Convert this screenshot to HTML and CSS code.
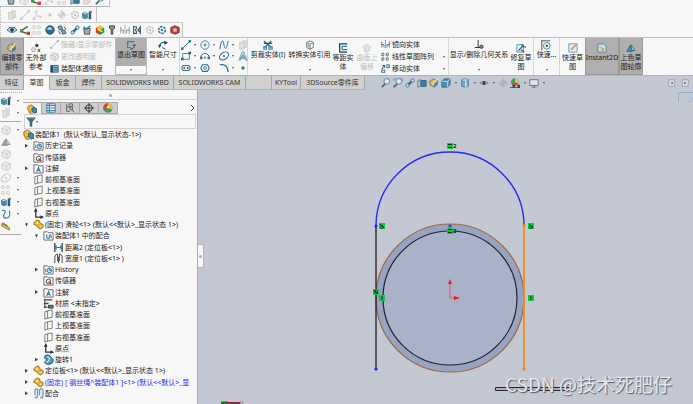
FILE: index.html
```
<!DOCTYPE html>
<html lang="zh-CN">
<head>
<meta charset="utf-8">
<title>SOLIDWORKS</title>
<link rel="stylesheet" href="styles.css">
</head>
<body>
<svg class="defs" aria-hidden="true">
<symbol id="plane" viewBox="0 0 12 12"><path d="M2 3l3-1v8l-3 1zM5 2l5-1v8l-5 1" fill="none" stroke="#555" stroke-width=".8"/></symbol>
<symbol id="planes" viewBox="0 0 12 12"><path d="M2 3h5v8H2zM5 1h5v8H7" fill="#d8d8d8" stroke="currentColor"/></symbol>
<symbol id="line" viewBox="0 0 12 12"><path d="M2 10l8-8" stroke="currentColor" stroke-width="1.2"/><path d="M0 9h3v3H0zM9 0h3v3H9z" fill="currentColor"/></symbol>
<symbol id="axis" viewBox="0 0 12 12"><path d="M5 1v6l6 1M5 7l-4 4" fill="none" stroke="currentColor"/><path d="M3 3l2-3 2 3zM9 6l3 2-3 2zM1 8v4h4z" fill="currentColor"/></symbol>
<symbol id="dot" viewBox="0 0 12 12"><circle cx="6" cy="6" r="2" fill="currentColor"/></symbol>
<symbol id="com" viewBox="0 0 12 12"><circle cx="6" cy="6" r="3.5" fill="none" stroke="currentColor"/><path d="M6 0v12M0 6h12" stroke="currentColor"/><path d="M6 3v3h3a3 3 0 0 0-3-3M6 9V6H3a3 3 0 0 0 3 3" fill="currentColor"/></symbol>
<symbol id="box" viewBox="0 0 12 12"><path d="M1 4l4-3 6 2v6l-4 3-6-3z" fill="#e6e6e6" stroke="currentColor"/><path d="M1 4l6 2 4-3M7 6v6" fill="none" stroke="currentColor"/></symbol>
<symbol id="part" viewBox="0 0 12 12"><path d="M0 4l3-2 4 2v6l-4 1-3-2z" fill="#4a8aac"/><path d="M1 4l2-1 3 1-2 1z" fill="#b9d7e4"/><path d="M8 2h3v9H8z" fill="#30586e"/><path d="M9 1h3v2H9z" fill="#777"/></symbol>
<symbol id="eye" viewBox="0 0 12 12"><path d="M0 6q6-7 12 0-6 6-12 0z" fill="#bcd5df" stroke="#355e73"/><circle cx="6" cy="6" r="2.2" fill="#17394d"/><path d="M2 2l2 2M10 2L8 4" stroke="#555"/></symbol>
<symbol id="look" viewBox="0 0 12 12"><path d="M1 6q5-4 10 0-5 4-10 0z" fill="#d5dbe2" stroke="#777"/><circle cx="6" cy="6" r="2" fill="#333"/></symbol>
<symbol id="mate" viewBox="0 0 12 12"><path d="M1 7l8-5M2 8l6 2" stroke="#444" stroke-width="1.4"/><path d="M0 5h4v4H0z" fill="#39a43d"/><path d="M8 8h4v4H8z" fill="#d43e32"/><path d="M5 3l4-2v3z" fill="#39a43d"/></symbol>
<symbol id="pattern" viewBox="0 0 12 12"><path d="M1 1h3v3H1zM7 1h3v3H7zM1 8h3v3H1zM7 8h3v3H7z" fill="none" stroke="currentColor"/></symbol>
<symbol id="ball" viewBox="0 0 12 12"><circle cx="6" cy="6" r="5" fill="#276b91" stroke="#1e4358"/><path d="M2 5q4-5 7 0-3 2-7 0" fill="#b4d8e8"/></symbol>
<symbol id="clips" viewBox="0 0 12 12"><path d="M1 2l4-1 2 4-4 1zM5 7l4-1 2 4-4 1z" fill="#78a9c2" stroke="#345467"/><path d="M8 2q3 1 2 4M2 7q0 3 3 4" fill="none" stroke="#444"/></symbol>
<symbol id="wrench" viewBox="0 0 12 12"><path d="M3 9l5-5" stroke="#346f91" stroke-width="3"/><circle cx="3" cy="9" r="2" fill="#c7dce5" stroke="#346f91"/><circle cx="9" cy="3" r="2" fill="#c7dce5" stroke="#346f91"/></symbol>
<symbol id="bucket" viewBox="0 0 12 12"><path d="M2 4h8l-1 7H3z" fill="#9aabb4" stroke="#3c4c55"/><path d="M2 2l3 3 5-4" fill="none" stroke="#26759b" stroke-width="1.5"/></symbol>
<symbol id="rainbow" viewBox="0 0 12 12"><path d="M1 3l5-3 5 3-5 3z" fill="#e5c927"/><path d="M1 3l5 3v6l-5-3z" fill="#db3629"/><path d="M11 3L6 6v6l5-3z" fill="#279847"/><path d="M3 5l6 3" stroke="#f7e632" stroke-width="2"/></symbol>
<symbol id="screw" viewBox="0 0 12 12"><path d="M3 1h6v3L7 5v6H5V5L3 4z" fill="#999" stroke="#333"/></symbol>
<symbol id="caliper" viewBox="0 0 12 12"><path d="M2 1v10M10 1v10M2 2h4M2 10h4M6 3L4 6l2 3M10 3L7 6l3 3" fill="none" stroke="#344e5b" stroke-width="1.3"/></symbol>
<symbol id="gear" viewBox="0 0 12 12"><circle cx="6" cy="6" r="4" fill="none" stroke="currentColor" stroke-width="2" stroke-dasharray="3 1"/><circle cx="6" cy="6" r="1.5" fill="currentColor"/></symbol>
<symbol id="redcube" viewBox="0 0 12 12"><path d="M1 3l5-2 5 2v6l-5 2-5-2z" fill="#c83e3e" stroke="#712b2b"/><path d="M4 4h4v4H4z" fill="#e9b7b2"/></symbol>
<symbol id="asm" viewBox="0 0 12 12"><path d="M1 3l4-2 3 2v4L4 9 1 7z" fill="#f1bd36" stroke="#95701c"/><path d="M6 5l3-1 3 2v4l-3 1-3-2z" fill="#4587ab" stroke="#285a76"/><path d="M2 8q1 4 5 3" fill="none" stroke="#d79e22" stroke-width="2"/></symbol>
<symbol id="gold" viewBox="0 0 12 12"><path d="M1 4l3-3 3 1 1 3 3 1v3l-3 2-3-2-1-2-3-1z" fill="#eab62d" stroke="#987018"/><path d="M3 4l2-1 1 2-2 1zM7 8l2-1 1 2" fill="#fae7a0"/></symbol>
<symbol id="folder" viewBox="0 0 12 12"><path d="M1 2h4l1 1h5v8H1z" fill="#fafafa" stroke="#666"/></symbol>
<symbol id="history" viewBox="0 0 12 12"><use href="#folder"/><circle cx="7" cy="7" r="2.5" fill="#d2e8f1" stroke="#287397"/><path d="M7 5v2h2M3 5v4" fill="none" stroke="#287397"/></symbol>
<symbol id="sensor" viewBox="0 0 12 12"><use href="#folder"/><circle cx="6" cy="7" r="2.5" fill="none" stroke="#444"/><path d="M6 7l3 3" stroke="#c33" stroke-width="1.5"/></symbol>
<symbol id="note" viewBox="0 0 12 12"><use href="#folder"/><path d="M4 10l2-5 2 5M5 8h2" fill="none" stroke="#2479a1" stroke-width="1.2"/></symbol>
<symbol id="matefolder" viewBox="0 0 12 12"><use href="#folder"/><path d="M4 5v3q2 3 3 0V6q2-2 2 3" fill="none" stroke="#5795b5" stroke-width="1.5"/></symbol>
<symbol id="origin" viewBox="0 0 12 12"><path d="M3 1v9h8" fill="none" stroke="#333" stroke-width="1.4"/><path d="M1 4l2-4 2 4zM8 8l4 2-4 2z" fill="#333"/></symbol>
<symbol id="distance" viewBox="0 0 12 12"><path d="M2 1v10M10 1v10" stroke="#333" stroke-width="1.3"/><path d="M2 6h8M4 4L2 6l2 2M8 4l2 2-2 2" fill="none" stroke="#2b7ea8" stroke-width="1.3"/></symbol>
<symbol id="width" viewBox="0 0 12 12"><path d="M2 11V3l3-2v8M7 9V1l3 2v8M6 4v7" fill="none" stroke="#444"/></symbol>
<symbol id="material" viewBox="0 0 12 12"><path d="M1 2h9M1 6h5M1 10h4" stroke="#444" stroke-width="1.5"/><path d="M2 1v10M6 8h5v3H6z" fill="#589" stroke="#333"/></symbol>
<symbol id="revolve" viewBox="0 0 12 12"><path d="M2 2q5-3 7 2 4 2 1 6-4 3-8 0-1-2 2-3Q5 5 2 5z" fill="#4b95bb" stroke="#255f7e"/><path d="M4 3q3 0 3 3-1 3-4 3" fill="none" stroke="#d3e8f1" stroke-width="1.3"/></symbol>
<symbol id="mates" viewBox="0 0 12 12"><path d="M2 8V3q0-2 2-2t1 2v6q-1 3-3 1M7 8V3q0-2 2-2t2 2v6q-1 3-3 1" fill="#d9e8ee" stroke="#6796ac" stroke-width="1.2"/></symbol>
<symbol id="editpart" viewBox="0 0 12 12"><path d="M1 4l4-3 5 2v5l-4 3-5-3z" fill="#e5b64e" stroke="#6d6757"/><path d="M6 6l4-2v4l-4 3z" fill="#4886a5"/><path d="M4 8l6-7" stroke="#f5eacb" stroke-width="1.5"/></symbol>
<symbol id="noref" viewBox="0 0 12 12"><circle cx="7" cy="3" r="2" fill="#444"/><circle cx="3" cy="8" r="2.5" fill="#ddd" stroke="#aaa"/><path d="M8 7l3 4M11 7l-3 4" stroke="#333"/></symbol>
<symbol id="transp" viewBox="0 0 12 12"><path d="M1 2h10v9H1z" fill="#79afc8" stroke="#255b76"/><path d="M1 2h3v9H1z" fill="#294c5c"/><path d="M5 5h5M5 8h5" stroke="#245670"/></symbol>
<symbol id="orient" viewBox="0 0 12 12"><path d="M1 4l3-3h7v7l-3 3H1z" fill="#4b8fae" stroke="#356e8b"/><path d="M1 4h7v7M8 4l3-3" fill="none" stroke="#d4e8f1"/></symbol>
<symbol id="exit" viewBox="0 0 12 12"><path d="M10 2H2v7h4" fill="none" stroke="#2e83ac" stroke-width="1.4"/><path d="M5 11q5 0 5-5M8 7l2-2 2 2" fill="none" stroke="#25546b" stroke-width="1.2"/></symbol>
<symbol id="smart" viewBox="0 0 12 12"><path d="M2 7Q3 2 9 3" fill="none" stroke="#27779e" stroke-width="1.7"/><path d="M0 6l4 0-2 4zM7 1l5 2-4 3z" fill="#294758"/><path d="M5 9l4 2" stroke="#333"/></symbol>
<symbol id="circle" viewBox="0 0 12 12"><circle cx="6" cy="6" r="5" fill="none" stroke="currentColor"/><path d="M4 6h4M6 4v4" stroke="currentColor"/></symbol>
<symbol id="spline" viewBox="0 0 12 12"><path d="M1 11C3-3 5 0 6 6s3 6 5-5" fill="none" stroke="currentColor" stroke-width="1.2"/></symbol>
<symbol id="rect" viewBox="0 0 12 12"><path d="M2 3h8v7H2z" fill="none" stroke="currentColor"/><path d="M0 8h3v3H0zM9 1h3v3H9z" fill="#245c78"/></symbol>
<symbol id="arc" viewBox="0 0 12 12"><path d="M1 8a5 5 0 0 1 10 0" fill="none" stroke="currentColor" stroke-width="1.2"/><path d="M0 7h3v3H0zM9 7h3v3H9zM5 7h2v2H5z" fill="currentColor"/></symbol>
<symbol id="ellipse" viewBox="0 0 12 12"><ellipse cx="6" cy="6" rx="6" ry="4" transform="rotate(-35 6 6)" fill="none" stroke="currentColor" stroke-width="1.2"/><circle cx="6" cy="6" r="1.3" fill="currentColor"/></symbol>
<symbol id="text" viewBox="0 0 12 12"><path d="M1 11L5 1h2l4 10H9L6 4l-3 7zM4 7h4v2H3z" fill="#d5e5ed" stroke="currentColor" stroke-width=".7"/></symbol>
<symbol id="slot" viewBox="0 0 12 12"><rect x="1" y="3" width="10" height="6" rx="3" fill="none" stroke="currentColor" stroke-width="1.3"/><path d="M3 6h6" stroke="#333" stroke-width="2" stroke-dasharray="2 2"/></symbol>
<symbol id="poly" viewBox="0 0 12 12"><path d="M1 6l2-4h6l2 4-2 4H3z" fill="none" stroke="currentColor" stroke-width="1.3"/><circle cx="6" cy="6" r="1.7" fill="none" stroke="currentColor"/></symbol>
<symbol id="fillet" viewBox="0 0 12 12"><path d="M1 2h3q6 0 7 9" fill="none" stroke="currentColor" stroke-width="1.4"/><path d="M6 2h5v5" fill="none" stroke="#bbb" stroke-dasharray="1 1"/></symbol>
<symbol id="trim" viewBox="0 0 12 12"><path d="M1 1l9 8M10 1L2 9M1 4h10" stroke="#27536a" stroke-width="1.4"/><path d="M1 8h3v3H1zM7 8h4v3H7z" fill="none" stroke="#4190b3" stroke-width="1.5"/></symbol>
<symbol id="convert" viewBox="0 0 12 12"><path d="M2 3l4-2 4 2v6l-4 2-4-2z" fill="#f2f4f5" stroke="#666"/><path d="M2 3l4 2 4-2M6 5v6" fill="none" stroke="#777"/><path d="M3 4v4l3 2V5z" fill="#8ac0d6"/></symbol>
<symbol id="offset" viewBox="0 0 12 12"><path d="M11 1H2v10h9" fill="none" stroke="#273d49" stroke-width="1.5"/><path d="M11 4H5v4h6" fill="none" stroke="#3187ae" stroke-width="1.5"/></symbol>
<symbol id="surface" viewBox="0 0 12 12"><path d="M1 5l5-4 5 4-5 4zM3 7v3l3 2 3-3V7" fill="#e1e1e1" stroke="#ccc"/></symbol>
<symbol id="mirror" viewBox="0 0 12 12"><path d="M6 0v12" stroke="#555" stroke-dasharray="2 1"/><path d="M1 2v8M1 6h3v4M11 2v8M11 6H8v4" fill="none" stroke="#3b7694" stroke-width="1.2"/></symbol>
<symbol id="linear" viewBox="0 0 12 12"><path d="M1 2q3-2 3 1t-3 2zM7 2q3-2 3 1T7 5zM1 8q3-2 3 1t-3 2zM7 8q3-2 3 1t-3 2z" fill="#dfe8ec" stroke="#365c6e"/></symbol>
<symbol id="move" viewBox="0 0 12 12"><path d="M1 7l3-4M2 2h3v3" fill="none" stroke="#333" stroke-width="1.3"/><path d="M8 1h3v4H8zM1 8h4v3H1z" fill="none" stroke="#2f83aa" stroke-width="1.4"/></symbol>
<symbol id="relation" viewBox="0 0 12 12"><path d="M5 0v9M1 9h8" stroke="#333" stroke-width="1.2"/><circle cx="9" cy="8" r="2" fill="#79909b" stroke="#333"/></symbol>
<symbol id="repair" viewBox="0 0 12 12"><path d="M1 2h8v9H1z" fill="#e2f0f6" stroke="#4c8aa8"/><path d="M3 9l6-6M7 1l1 3 4 1M6 8l4 3" fill="none" stroke="#286b8b" stroke-width="1.5"/></symbol>
<symbol id="snap" viewBox="0 0 12 12"><path d="M1 0v12M1 1h10" stroke="#333"/><circle cx="7" cy="7" r="4" fill="none" stroke="#317fa2"/><circle cx="7" cy="7" r="1.3" fill="#333"/></symbol>
<symbol id="rapid" viewBox="0 0 12 12"><path d="M1 1h10v10H1z" fill="#e1f0f6" stroke="#5796b1"/><path d="M3 9l1-3 6-5 1 1-6 6z" fill="#e39245"/></symbol>
<symbol id="instant" viewBox="0 0 12 12"><path d="M1 1h7l3 3v7H1z" fill="#c8dfe8" stroke="#417d99"/><path d="M3 4l5 5M8 6v3H5" fill="none" stroke="#e2a83c" stroke-width="1.5"/></symbol>
<symbol id="shade" viewBox="0 0 12 12"><path d="M1 10l4-7 3 7z" fill="#478bad" stroke="#286282"/><path d="M6 2l5 7H7z" fill="#9ac4d8" stroke="#356e8b"/></symbol>
<symbol id="mag" viewBox="0 0 12 12"><circle cx="7" cy="4" r="3.4" fill="#dce7ef" stroke="#537991"/><path d="M5 7l-4 4" stroke="#47687c" stroke-width="2"/></symbol>
<symbol id="fit" viewBox="0 0 12 12"><path d="M1 4V1h3M9 1h2v3M1 8v3" fill="none" stroke="#6b95ad"/><use href="#mag"/></symbol>
<symbol id="section" viewBox="0 0 12 12"><path d="M1 3l3-1v8l-3 1z" fill="#c2d6df" stroke="#466e81"/><path d="M5 3h6v7H5z" fill="#3681a3" stroke="#315b6e"/></symbol>
<symbol id="cyl" viewBox="0 0 12 12"><path d="M2 2h8v8q-4 2-8 0z" fill="#6caac4" stroke="#46788e"/><ellipse cx="6" cy="2.5" rx="4" ry="1.5" fill="#d9eaf1" stroke="#46788e"/><path d="M7 4v7" stroke="#c8e4ef" stroke-width="2"/></symbol>
<symbol id="palette" viewBox="0 0 12 12"><circle cx="6" cy="6" r="5.5" fill="#2e8fd0"/><path d="M6 6V0a6 6 0 0 1 5 8z" fill="#f0bf2c"/><path d="M6 6L1 9a6 6 0 0 1 5-9z" fill="#dd4432"/><path d="M6 6l5 3q-5 5-10 0z" fill="#3ba550"/><circle cx="6" cy="5" r="1.4" fill="#eee"/></symbol>
<symbol id="scene" viewBox="0 0 12 12"><circle cx="6" cy="5" r="4.500" fill="#3f8fca"/><path d="M6 5V0a5 5 0 0 1 4 7z" fill="#e8c04a"/><path d="M6 5L2 7a5 5 0 0 1 4-7z" fill="#3ba550"/><path d="M2 7l4-2 4 2-4 3z" fill="#d84a3a"/><path d="M0 11h3V8h3v3h3V8h3v4H0z" fill="#444"/></symbol>
<symbol id="monitor" viewBox="0 0 12 12"><path d="M1 2h10v7H1zM6 9v2M3 11h6" fill="#dfe3ea" stroke="#62666e"/></symbol>
<symbol id="list" viewBox="0 0 12 12"><path d="M1 1h10v10H1z" fill="#eef6fa" stroke="#277196"/><path d="M1 3h10M1 6h10M1 9h10M4 1v10" stroke="#277196"/></symbol>
<symbol id="config" viewBox="0 0 12 12"><path d="M2 1v9h4M2 5h4M5 1h4v3H5zM6 5h3v3H6zM8 8l3 3" fill="none" stroke="#555"/></symbol>
<symbol id="target" viewBox="0 0 12 12"><circle cx="6" cy="6" r="4" fill="none" stroke="#222"/><path d="M6 0v12M0 6h12" stroke="#222"/></symbol>
<symbol id="funnel" viewBox="0 0 12 12"><path d="M1 1h10L7 6v5H5V6z" fill="#2c708f" stroke="#395461"/><path d="M2 1h8" stroke="#bbd2dc"/></symbol>
<symbol id="measure" viewBox="0 0 12 12"><path d="M1 3l9 5v3L1 6z" fill="#efbd32" stroke="#8b7028"/><path d="M2 2l6 4" stroke="#333"/></symbol>
<symbol id="curve" viewBox="0 0 12 12"><path d="M1 2q6-2 3 4-3 5 3 5 5-1 3-9" fill="none" stroke="#3685aa" stroke-width="1.4"/></symbol>
<symbol id="pane" viewBox="0 0 12 12"><path d="M1 1h9v10H1z" fill="#d8dbe2" stroke="#92969f"/><path d="M7 4v4L4 6z" fill="#555"/></symbol>
</svg>

<header class="bars">
  <div class="bar bar-cut">
    <button aria-label="装配"><svg><use href="#bucket"/></svg></button><button aria-label="隐藏" class="dim"><svg><use href="#box"/></svg></button><button aria-label="配合"><svg><use href="#mate"/></svg></button><button aria-label="移动" class="dim"><svg><use href="#axis"/></svg></button><button aria-label="阵列" class="dim"><svg><use href="#pattern"/></svg></button><button aria-label="剖面"><svg><use href="#section"/></svg></button><button aria-label="平面" class="dim"><svg><use href="#planes"/></svg></button><button aria-label="查找"><svg><use href="#mag"/></svg></button>
  </div>
  <div class="bar bar-ref dim">
    <button aria-label="基准面"><svg><use href="#planes"/></svg></button><button aria-label="基准轴"><svg><use href="#line"/></svg></button><button aria-label="坐标系"><svg><use href="#axis"/></svg></button><button aria-label="点"><svg><use href="#dot"/></svg></button><button aria-label="质心"><svg><use href="#com"/></svg></button><button aria-label="边界框"><svg><use href="#gear"/></svg></button><button aria-label="配合参考"><svg><use href="#part"/></svg></button>
  </div>
  <div class="bar bar-asm">
    <button aria-label="显示"><svg><use href="#eye"/></svg></button><button aria-label="配合"><svg><use href="#mate"/></svg></button><button aria-label="阵列" class="dim"><svg><use href="#pattern"/></svg></button><button aria-label="外观"><svg><use href="#ball"/></svg></button><button aria-label="移动零件"><svg><use href="#clips"/></svg></button><button aria-label="旋转零件"><svg><use href="#wrench"/></svg></button><button aria-label="检查"><svg><use href="#bucket"/></svg></button><button aria-label="干涉"><svg><use href="#rainbow"/></svg></button><button aria-label="扣件"><svg><use href="#screw"/></svg></button><button aria-label="对齐" class="dim"><svg><use href="#mirror"/></svg></button><button aria-label="间隙"><svg><use href="#caliper"/></svg></button><button aria-label="性能" class="dim"><svg><use href="#gear"/></svg></button><button aria-label="更新" class="blue"><svg><use href="#gear"/></svg></button><button aria-label="运动"><svg><use href="#redcube"/></svg></button>
  </div>
</header>

<section class="ribbon">
  <button class="cmd on w24"><svg><use href="#editpart"/></svg>编辑零<br>部件</button>
  <button class="cmd w24"><svg><use href="#noref"/></svg>无外部<br>参考</button>
  <div class="stack display">
    <button disabled><svg><use href="#line"/></svg>隐藏/显示零部件</button>
    <button disabled><svg><use href="#box"/></svg>更改透明度</button>
    <button><svg><use href="#transp"/></svg>装配体透明度</button>
  </div>
  <button class="cmd exit w32"><span><svg><use href="#exit"/></svg>退出草图</span><i class="dd"></i></button>
  <button class="cmd split w32"><span><svg><use href="#smart"/></svg>智能尺寸</span><i class="dd"></i></button>
  <div class="sketch">
    <button aria-label="直线" class="drop"><svg><use href="#line"/></svg></button><button aria-label="圆" class="drop"><svg><use href="#circle"/></svg></button><button aria-label="样条曲线" class="drop"><svg><use href="#spline"/></svg></button><button aria-label="基准面" class="dim"><svg><use href="#planes"/></svg></button>
    <button aria-label="矩形" class="drop"><svg><use href="#rect"/></svg></button><button aria-label="圆弧" class="drop"><svg><use href="#arc"/></svg></button><button aria-label="椭圆" class="drop"><svg><use href="#ellipse"/></svg></button><button aria-label="文字"><svg><use href="#text"/></svg></button>
    <button aria-label="槽口" class="drop"><svg><use href="#slot"/></svg></button><button aria-label="多边形"><svg><use href="#poly"/></svg></button><button aria-label="圆角" class="drop"><svg><use href="#fillet"/></svg></button><button aria-label="点"><svg><use href="#dot"/></svg></button>
  </div>
  <button class="cmd split w40"><span><svg><use href="#trim"/></svg>剪裁实体(I)</span><i class="dd"></i></button>
  <button class="cmd split w42"><span><svg><use href="#convert"/></svg>转换实体引用</span><i class="dd"></i></button>
  <button class="cmd w24"><svg><use href="#offset"/></svg>等距实<br>体</button>
  <button class="cmd w24" disabled><svg><use href="#surface"/></svg>曲面上<br>偏移</button>
  <div class="stack edit">
    <button><svg><use href="#mirror"/></svg>镜向实体</button>
    <button class="drop"><svg><use href="#linear"/></svg>线性草图阵列</button>
    <button class="drop"><svg><use href="#move"/></svg>移动实体</button>
  </div>
  <button class="cmd split w60"><span><svg><use href="#relation"/></svg>显示/删除几何关系</span><i class="dd"></i></button>
  <button class="cmd w24"><svg><use href="#repair"/></svg>修复草<br>图</button>
  <button class="cmd split rule w26"><span><svg><use href="#snap"/></svg>快速...</span><i class="dd"></i></button>
  <button class="cmd rule w26"><svg><use href="#rapid"/></svg>快速草<br>图</button>
  <button class="cmd on w34"><svg><use href="#instant"/></svg>Instant2D</button>
  <button class="cmd on w24"><svg><use href="#shade"/></svg>上色草<br>图轮廓</button>
</section>

<div class="tabrow">
  <nav class="tabs">
    <a href="#" class="w24">特征</a><a href="#" class="w26 active">草图</a><a href="#" class="w26">钣金</a><a href="#" class="w26">焊件</a><a href="#" class="w72">SOLIDWORKS MBD</a><a href="#" class="w72">SOLIDWORKS CAM</a><a href="#" class="w26" aria-label="插件"></a><a href="#" class="w30">KYTool</a><a href="#" class="w64">3DSource零件库</a>
  </nav>
  <div class="hud">
    <div class="views">
      <button aria-label="整屏显示"><svg><use href="#mag"/></svg></button><button aria-label="局部放大"><svg><use href="#fit"/></svg></button><button aria-label="上一视图"><svg><use href="#wrench"/></svg></button><button aria-label="剖面视图"><svg><use href="#section"/></svg></button><button aria-label="动态注解"><svg><use href="#editpart"/></svg></button><button aria-label="视图定向" class="drop"><svg><use href="#orient"/></svg></button><button aria-label="显示样式" class="drop"><svg><use href="#cyl"/></svg></button><button aria-label="隐藏项目" class="drop"><svg><use href="#look"/></svg></button><button aria-label="编辑外观" class="faint"><svg><use href="#com"/></svg></button><button aria-label="应用布景" class="drop"><svg><use href="#scene"/></svg></button><button aria-label="视图设定" class="drop"><svg><use href="#monitor"/></svg></button>
    </div>
    <div class="panes"><button aria-label="左窗格"><svg><use href="#pane"/></svg></button><button aria-label="右窗格" class="flip"><svg><use href="#pane"/></svg></button></div>
  </div>
</div>

<main class="work">
  <aside class="side">
    <button aria-label="零件" class="drop"><svg><use href="#part"/></svg></button>
    <button aria-label="框" class="drop dim"><svg><use href="#planes"/></svg></button>
    <hr>
    <button aria-label="拉伸" class="drop dim"><svg><use href="#box"/></svg></button>
    <button aria-label="筋" class="dim"><svg><use href="#shade"/></svg></button>
    <button aria-label="切除" class="dim"><svg><use href="#box"/></svg></button>
    <button aria-label="抽壳" class="dim"><svg><use href="#box"/></svg></button>
    <button aria-label="圆角" class="drop dim"><svg><use href="#ellipse"/></svg></button>
    <button aria-label="阵列" class="drop dim"><svg><use href="#pattern"/></svg></button>
    <button aria-label="参考几何体" class="drop"><svg><use href="#part"/></svg></button>
    <button aria-label="曲线" class="drop"><svg><use href="#curve"/></svg></button>
    <button aria-label="测量"><svg><use href="#measure"/></svg></button>
    <hr>
  </aside>
  <section class="manager">
    <div class="grip"></div>
    <div class="mtabs">
      <button class="active" aria-label="设计树"><svg><use href="#asm"/></svg></button><button aria-label="属性"><svg><use href="#list"/></svg></button><button aria-label="配置"><svg><use href="#config"/></svg></button><button aria-label="尺寸"><svg><use href="#target"/></svg></button><button aria-label="外观"><svg><use href="#palette"/></svg></button>
      <button class="more" aria-label="更多"><svg viewBox="0 0 6 8"><path d="M1 1l3 3-3 3" fill="none" stroke="#444"/></svg></button>
    </div>
    <button class="filter drop" aria-label="过滤"><svg><use href="#funnel"/></svg></button>
    <ul class="tree">
      <li class="l0"><svg><use href="#asm"/></svg>装配体1&nbsp; (默认&lt;默认_显示状态-1&gt;)</li>
      <li class="l1 shut"><svg><use href="#history"/></svg>历史记录</li>
      <li class="l1"><svg><use href="#sensor"/></svg>传感器</li>
      <li class="l1 shut"><svg><use href="#note"/></svg>注解</li>
      <li class="l1"><svg><use href="#plane"/></svg>前视基准面</li>
      <li class="l1"><svg><use href="#plane"/></svg>上视基准面</li>
      <li class="l1"><svg><use href="#plane"/></svg>右视基准面</li>
      <li class="l1"><svg><use href="#origin"/></svg>原点</li>
      <li class="l1 open"><svg><use href="#gold"/></svg>(固定) 滑轮&lt;1&gt; (默认&lt;&lt;默认&gt;_显示状态 1&gt;)</li>
      <li class="l2 open"><svg><use href="#matefolder"/></svg>装配体1 中的配合</li>
      <li class="l3"><svg><use href="#distance"/></svg>距离2 (定位板&lt;1&gt;)</li>
      <li class="l3"><svg><use href="#width"/></svg>宽度1 (定位板&lt;1&gt; )</li>
      <li class="l2 shut"><svg><use href="#history"/></svg>History</li>
      <li class="l2"><svg><use href="#sensor"/></svg>传感器</li>
      <li class="l2 shut"><svg><use href="#note"/></svg>注解</li>
      <li class="l2"><svg><use href="#material"/></svg>材质 &lt;未指定&gt;</li>
      <li class="l2"><svg><use href="#plane"/></svg>前视基准面</li>
      <li class="l2"><svg><use href="#plane"/></svg>上视基准面</li>
      <li class="l2"><svg><use href="#plane"/></svg>右视基准面</li>
      <li class="l2"><svg><use href="#origin"/></svg>原点</li>
      <li class="l2 shut"><svg><use href="#revolve"/></svg>旋转1</li>
      <li class="l1 shut"><svg><use href="#gold"/></svg>定位板&lt;1&gt; (默认&lt;&lt;默认&gt;_显示状态 1&gt;)</li>
      <li class="l1 shut under"><svg><use href="#gold"/></svg>(固定) [ 钢丝绳^装配体1 ]&lt;1&gt; (默认&lt;&lt;默认&gt;_显</li>
      <li class="l1 shut"><svg><use href="#mates"/></svg>配合</li>
    </ul>
  </section>
  <section class="canvas">
    <button class="handle" aria-label="折叠"></button>
    <svg class="drawing" viewBox="198 90 495 314" preserveAspectRatio="xMinYMin meet">
      <circle cx="450" cy="298" r="74" fill="#98a2c3" stroke="#a0673c" stroke-width="1.2"/>
      <circle cx="450" cy="298" r="67" fill="#aab2c9" stroke="#20242c" stroke-width="1.2"/>
      <path d="M376 226v143" stroke="#25272d" stroke-width="1.4"/>
      <path d="M376 226a74 74 0 0 1 148 0" fill="none" stroke="#2a2af0" stroke-width="1.4"/>
      <path d="M524 226v143" stroke="#f58a1f" stroke-width="1.8"/>
      <circle cx="376" cy="226" r="1.5" fill="#1a1af0"/><circle cx="376" cy="369" r="1.5" fill="#1a1af0"/>
      <circle cx="524" cy="226" r="1.8" fill="#f58a1f"/><circle cx="524" cy="369" r="1.8" fill="#f58a1f"/>
      <path d="M450 298v-15M450 298h6" stroke="#d8636d"/><path d="M448 284l2-5 2 5zM454 296l6 2-6 2z" fill="#f01818"/>
      <path d="M448 226h4M450 224v4" stroke="#3434e0"/>
      <path d="M447 143h6v6h-6zM447 228h6v6h-6zM379 223h6v6h-6zM528 223h6v6h-6zM373 289h6v6h-6zM379 295h6v6h-6zM528 295h6v6h-6z" fill="#10c545"/>
      <path d="M448 144.500h4M448 147.500h4M448 229.500h4M448 232.500h4M380 224l4 4M529 224l4 4M374 290l4 4M382 296v4M531 296v4" stroke="#073e19"/>
      <g fill="none" stroke="#073e19" stroke-width=".7"><circle cx="382" cy="227" r="1.5"/><circle cx="531" cy="227" r="1.5"/><circle cx="376" cy="292" r="1.5"/></g>
      <text x="453" y="148" class="rel">2</text><text x="453" y="233" class="rel">2</text>
      <path d="M495.500 387.500h74v3h-74z" fill="#b7abb4" stroke="#25252a"/>
      <path d="M693 92.500h-14.500v9" fill="none" stroke="#8db3ca"/><path d="M693 98l-4 4" stroke="#8db3ca"/>
      <path d="M221 403h7" stroke="#1d6b2c" stroke-width="3"/><path d="M227 403h13" stroke="#9e2330" stroke-width="2"/><path d="M240 401l3 3M243 401l-3 3" stroke="#e85d65"/>
      <text x="505" y="392" class="mark">CSDN @技术死肥仔</text>
    </svg>
  </section>
</main>
</body>
</html>
```
FILE: styles.css
```
* { box-sizing: border-box; }
body {
  margin: 0;
  height: 100vh;
  display: flex;
  flex-direction: column;
  overflow: hidden;
  background: #f7f7f7;
  color: #222;
  font: 7px/11px "Noto Sans", "Noto Sans CJK SC", sans-serif;
}
button {
  margin: 0;
  padding: 0;
  border: 0;
  background: none;
  color: inherit;
  font: inherit;
  white-space: nowrap;
}
svg { width: 10px; height: 10px; flex: none; display: block; }
.defs { position: absolute; width: 0; height: 0; }
.dim { color: #b5b5b5; }
.dim svg { opacity: .7; filter: grayscale(1); }
.bar-ref button:last-child svg { opacity: 1; filter: none; }
.faint { color: #a9adb6; }
.blue { color: #3a82a5; }
button:disabled { color: #bcbcbc; }

.w24 { width: 24px; }
.w26 { width: 26px; }
.w30 { width: 29px; }
.w32 { width: 32px; }
.w34 { width: 34px; }
.w40 { width: 40px; }
.w42 { width: 43px; }
.w60 { width: 60px; }
.w64 { width: 64px; }
.w72 { width: 72px; }

.drop { display: flex; align-items: center; }
.drop::after, .dd {
  content: "";
  width: 0;
  border: 1px solid transparent;
  border-top: 2px solid #555;
  border-bottom: 0;
}

/* toolbars */
.bars { flex: none; }
.bar {
  display: flex;
  align-items: center;
  justify-content: space-between;
  padding-left: 6px;
  border-right: 1px solid #c4c4c4;
}
.bar-cut { width: 110px; height: 7px; padding-right: 4px; align-items: flex-end; overflow: hidden; border-bottom: 1px solid #b8b8b8; }
.bar-cut svg { margin-bottom: 1px; }
.bar-ref { width: 97px; height: 15px; padding-right: 4px; border-left: 1px dotted #bbb; }
.bar-asm { width: 183px; height: 15px; padding-right: 2px; border-top: 1px solid #cfcfcf; border-left: 1px dotted #bbb; }
.bars::after { content: ""; display: block; border-top: 1px solid #bdbdbd; }

/* command ribbon */
.ribbon { flex: none; display: flex; height: 38px; border-bottom: 1px solid #b4b4b4; }
.cmd {
  flex: none;
  display: flex;
  flex-direction: column;
  align-items: center;
  padding-top: 5px;
  line-height: 9px;
}
.cmd span { display: flex; flex-direction: column; align-items: center; }
.cmd .dd { margin-top: 10px; }
.on { background: #afafaf; border: 1px solid #999; border-top: 0; }
.rule { border-left: 1px solid #d6d6d6; }
.cmd.exit { padding: 0; border: 1px solid #bbb; border-top: 0; }
.exit span { width: 100%; height: 28px; padding-top: 2px; background: #afafaf; }
.cmd.exit .dd { margin-top: 3px; }
.cmd.split { padding-top: 2px; }
.stack { display: flex; flex-direction: column; justify-content: space-between; padding: 1px 0 1px 2px; }
.stack button { display: flex; align-items: center; gap: 2px; line-height: 11px; }
.display { width: 67px; }
.edit { width: 70px; border-right: 1px solid #d6d6d6; padding-right: 3px; }
.stack svg { width: 9px; height: 9px; }
.edit .drop::after { margin-left: auto; }
.sketch {
  width: 69px;
  display: grid;
  grid-template-columns: repeat(3, 19px) 10px;
  align-items: center;
  padding: 1px;
  border: solid #d6d6d6;
  border-width: 0 1px;
  color: #2f7396;
}
.sketch .drop { gap: 3px; }

/* command tabs and view toolbar */
.tabrow { flex: none; display: flex; height: 14px; }
.tabs { display: flex; background: #d0d0d0; }
.tabs a {
  border-right: 1px solid #a6a6a6;
  border-bottom: 1px solid #b5b5b5;
  color: #333;
  text-align: center;
  text-decoration: none;
  line-height: 13px;
}
.tabs .active { background: #f7f7f7; border-bottom-color: #f7f7f7; }
.hud { flex: 1; display: flex; justify-content: space-between; align-items: center; background: #c4c8d2; padding: 0 4px 0 16px; }
.views, .panes { display: flex; align-items: center; gap: 2px; }
.views .drop { gap: 4px; margin-right: 1px; }
.panes svg { width: 8px; height: 8px; }
.panes { gap: 5px; }
.flip { transform: scaleX(-1); }

/* work area */
.work { flex: 1; min-height: 0; display: flex; }
.side { width: 22px; flex: none; display: flex; flex-direction: column; gap: 2px; margin-top: 2px; padding-top: 3px; border-top: 1px dotted #aaa; }
.side button { display: flex; height: 10px; padding-left: 1px; }
.side .drop { align-items: center; gap: 6px; }
.side hr { width: 21px; margin: 1px 0; border: 0; border-top: 1px solid #aaa; }
.manager { width: 176px; flex: none; display: flex; flex-direction: column; padding-left: 1px; border-right: 1px solid #aaa; overflow: hidden; }
.grip { height: 10px; flex: none; border-bottom: 1px solid #d2d2d2; }
.grip::before { content: ""; display: block; width: 3px; height: 3px; margin: 4px auto 0; border-radius: 50%; background: #aaa; }
.mtabs { display: flex; flex: none; margin-top: 2px; }
.mtabs button { width: 19px; height: 12px; display: grid; place-items: center; background: #cdcdcd; border: 1px solid #aaa; border-left: 0; }
.mtabs .active { background: #f7f7f7; border-bottom: 0; }
.mtabs .more { width: 8px; margin-left: auto; background: none; border: 0; }
.more svg { width: 6px; height: 8px; }
.filter { flex: none; height: 15px; margin: 0 1px; padding-left: 1px; border: 1px solid #d2d2d2; }
.tree {
  flex: 1;
  min-height: 0;
  display: flex;
  flex-direction: column;
  justify-content: space-between;
  margin: 0;
  padding: 0 0 5px;
  list-style: none;
}
.tree li { display: flex; align-items: center; gap: 1px; height: 11px; white-space: nowrap; }
.tree svg { width: 11px; height: 11px; }
.tree li::before { content: ""; flex: none; width: 3px; height: 4px; margin-right: 4px; }
.tree .l0::before { display: none; }
.tree .shut::before { background: #444; clip-path: polygon(0 0, 100% 50%, 0 100%); }
.tree .open::before { background: #444; clip-path: polygon(0 20%, 100% 20%, 50% 100%); }
.l1 { padding-left: 2px; }
.l2 { padding-left: 12px; }
.l3 { padding-left: 22px; }
.under { color: #2b2bf0; }
.canvas { flex: 1; position: relative; min-width: 0; background: #c4c8d2; }
.drawing { width: 100%; height: auto; }
.handle { position: absolute; left: 0; top: 154px; width: 6px; height: 24px; background: #f7f7f7; border: 1px solid #b5b5b5; border-left: 0; }
.handle::after { content: ""; display: block; width: 3px; height: 3px; margin: auto; border-radius: 50%; background: #aaa; }
.rel { font-size: 6px; font-weight: 700; fill: #222; }
.mark { font: 19px "Noto Sans CJK SC", sans-serif; fill: #e6e8ec; text-shadow: 1px 1px 1px #555a66; }
```
